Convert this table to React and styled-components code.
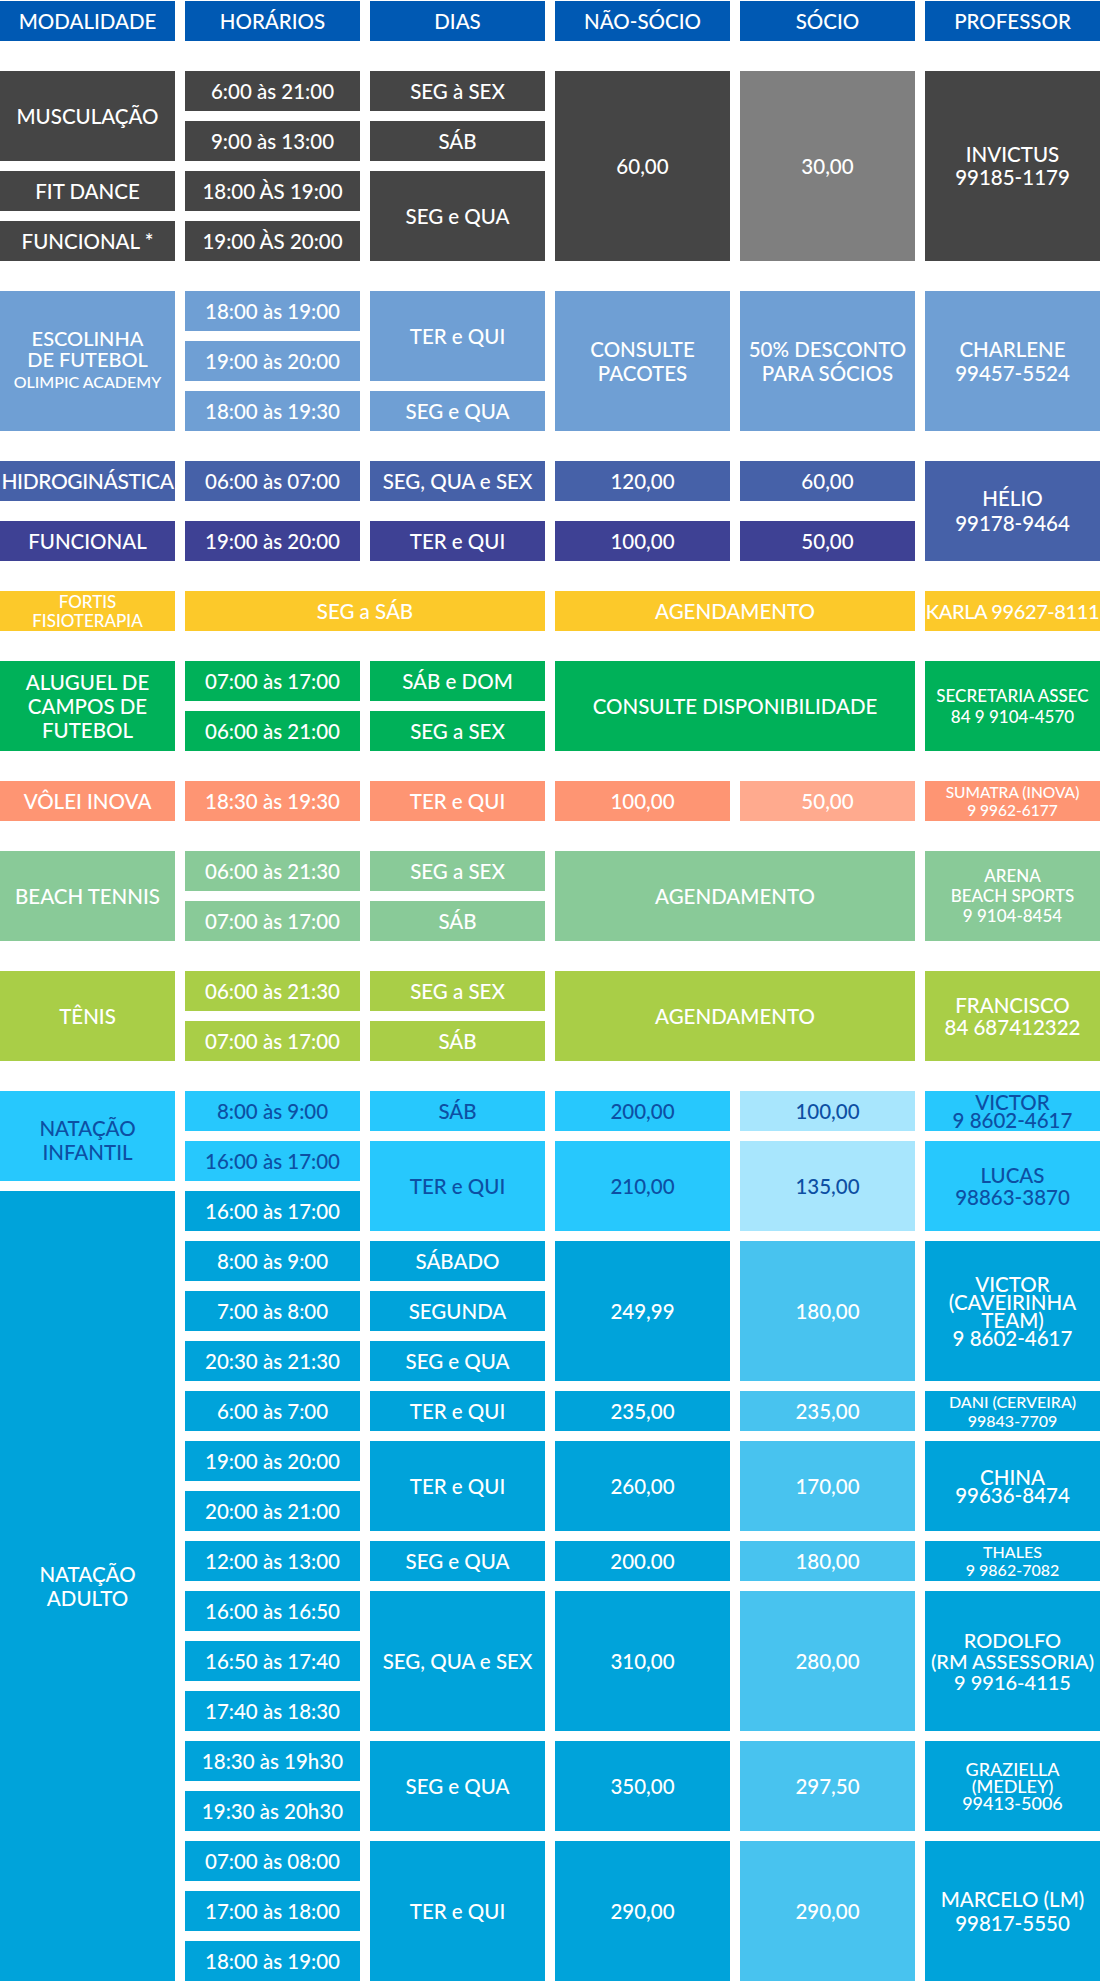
import styled, { createGlobalStyle } from "styled-components";

const GlobalStyle = createGlobalStyle`
  body {
    margin: 0;
    background: #ffffff;
    font-family: "Lato", "Open Sans", sans-serif;
  }
`;

const C = {
    header: "#0059b3",
    dark: "#454545",
    grey: "#7f7f7f",
    escolinha: "#6f9fd4",
    hidro: "#4661a8",
    funcional: "#3e4194",
    yellow: "#fcc92a",
    green: "#00b159",
    orange: "#fe9573",
    orangeLight: "#ffaa8e",
    beach: "#89ca98",
    tenis: "#a9ce47",
    cyan: "#27c8fd",
    cyanLight: "#a8e6fd",
    ink: "#0d4fa3",
    adulto: "#00a3da",
    adultoLight: "#48c3ef",
};

const Page = styled.div`
    width: 1100px;
    padding-top: 1px;
    display: flex;
    flex-direction: column;
    gap: 30px;
`;

const Section = styled.div`
    display: grid;
    grid-template-columns: repeat(6, 175px);
    grid-auto-rows: 40px;
    column-gap: 10px;
    row-gap: ${({ $rowGap }) => $rowGap || 10}px;
`;

const HeadCell = styled.div`
    background: ${C.header};
    color: #fff;
    font-size: 20.5px;
    font-weight: 500;
    display: flex;
    align-items: center;
    justify-content: center;
`;

const Cell = styled.div`
    grid-row: ${({ $r }) => $r} / span ${({ $rs }) => $rs || 1};
    grid-column: ${({ $c }) => $c} / span ${({ $cs }) => $cs || 1};
    box-sizing: border-box;
    padding-top: ${({ $pt }) => $pt || 0}px;
    background: ${({ $bg }) => $bg};
    color: ${({ $ink }) => $ink || "#fff"};
    font-size: ${({ $size }) => $size || 20.5}px;
    line-height: ${({ $lh }) => ($lh ? `${$lh}px` : 1.2)};
    letter-spacing: ${({ $ls }) => $ls || 0}px;
    font-weight: 500;
    display: flex;
    flex-direction: column;
    align-items: center;
    justify-content: center;
    text-align: center;
    white-space: pre;
    overflow: visible;
`;

const Small = styled.span`
    display: block;
    font-size: 16px;
    line-height: 24px;
`;

const heads = ["MODALIDADE", "HORÁRIOS", "DIAS", "NÃO-SÓCIO", "SÓCIO", "PROFESSOR"];

const cell = (r, c, text, bg, extra = {}) => ({ r, c, text, bg, ...extra });

const sections = [
    {
        cells: [
            cell(1, 1, "MUSCULAÇÃO", C.dark, { rs: 2 }),
            cell(3, 1, "FIT DANCE", C.dark),
            cell(4, 1, "FUNCIONAL *", C.dark),
            cell(1, 2, "6:00 às 21:00", C.dark),
            cell(2, 2, "9:00 às 13:00", C.dark),
            cell(3, 2, "18:00 ÀS 19:00", C.dark),
            cell(4, 2, "19:00 ÀS 20:00", C.dark),
            cell(1, 3, "SEG à SEX", C.dark),
            cell(2, 3, "SÁB", C.dark),
            cell(3, 3, "SEG e QUA", C.dark, { rs: 2 }),
            cell(1, 4, "60,00", C.dark, { rs: 4 }),
            cell(1, 5, "30,00", C.grey, { rs: 4 }),
            cell(1, 6, "INVICTUS\n99185-1179", C.dark, { rs: 4, lh: 23 }),
        ],
    },
    {
        cells: [
            cell(1, 1, <>ESCOLINHA{"\n"}DE FUTEBOL<Small>OLIMPIC ACADEMY</Small></>, C.escolinha, { rs: 3, size: 20, lh: 21 }),
            cell(1, 2, "18:00 às 19:00", C.escolinha),
            cell(2, 2, "19:00 às 20:00", C.escolinha),
            cell(3, 2, "18:00 às 19:30", C.escolinha),
            cell(1, 3, "TER e QUI", C.escolinha, { rs: 2 }),
            cell(3, 3, "SEG e QUA", C.escolinha),
            cell(1, 4, "CONSULTE\nPACOTES", C.escolinha, { rs: 3, lh: 24 }),
            cell(1, 5, "50% DESCONTO\nPARA SÓCIOS", C.escolinha, { rs: 3, lh: 24 }),
            cell(1, 6, "CHARLENE\n99457-5524", C.escolinha, { rs: 3, lh: 24 }),
        ],
    },
    {
        rowGap: 20,
        cells: [
            cell(1, 1, "HIDROGINÁSTICA", C.hidro, { size: 21, ls: -0.4 }),
            cell(1, 2, "06:00 às 07:00", C.hidro),
            cell(1, 3, "SEG, QUA e SEX", C.hidro),
            cell(1, 4, "120,00", C.hidro),
            cell(1, 5, "60,00", C.hidro),
            cell(2, 1, "FUNCIONAL", C.funcional),
            cell(2, 2, "19:00 às 20:00", C.funcional),
            cell(2, 3, "TER e QUI", C.funcional),
            cell(2, 4, "100,00", C.funcional),
            cell(2, 5, "50,00", C.funcional),
            cell(1, 6, "HÉLIO\n99178-9464", C.hidro, { rs: 2, lh: 25 }),
        ],
    },
    {
        cells: [
            cell(1, 1, "FORTIS\nFISIOTERAPIA", C.yellow, { size: 17, lh: 19 }),
            cell(1, 2, "SEG a SÁB", C.yellow, { cs: 2 }),
            cell(1, 4, "AGENDAMENTO", C.yellow, { cs: 2 }),
            cell(1, 6, "KARLA 99627-8111", C.yellow, { size: 20, ls: -0.4 }),
        ],
    },
    {
        cells: [
            cell(1, 1, "ALUGUEL DE\nCAMPOS DE\nFUTEBOL", C.green, { rs: 2, lh: 24 }),
            cell(1, 2, "07:00 às 17:00", C.green),
            cell(2, 2, "06:00 às 21:00", C.green),
            cell(1, 3, "SÁB e DOM", C.green),
            cell(2, 3, "SEG a SEX", C.green),
            cell(1, 4, "CONSULTE DISPONIBILIDADE", C.green, { rs: 2, cs: 2 }),
            cell(1, 6, "SECRETARIA ASSEC\n84 9 9104-4570", C.green, { rs: 2, size: 17, lh: 21 }),
        ],
    },
    {
        cells: [
            cell(1, 1, "VÔLEI INOVA", C.orange),
            cell(1, 2, "18:30 às 19:30", C.orange),
            cell(1, 3, "TER e QUI", C.orange),
            cell(1, 4, "100,00", C.orange),
            cell(1, 5, "50,00", C.orangeLight),
            cell(1, 6, "SUMATRA (INOVA)\n9 9962-6177", C.orange, { size: 15.5, lh: 18 }),
        ],
    },
    {
        cells: [
            cell(1, 1, "BEACH TENNIS", C.beach, { rs: 2 }),
            cell(1, 2, "06:00 às 21:30", C.beach),
            cell(2, 2, "07:00 às 17:00", C.beach),
            cell(1, 3, "SEG a SEX", C.beach),
            cell(2, 3, "SÁB", C.beach),
            cell(1, 4, "AGENDAMENTO", C.beach, { rs: 2, cs: 2 }),
            cell(1, 6, "ARENA\nBEACH SPORTS\n9 9104-8454", C.beach, { rs: 2, size: 17, lh: 20 }),
        ],
    },
    {
        cells: [
            cell(1, 1, "TÊNIS", C.tenis, { rs: 2 }),
            cell(1, 2, "06:00 às 21:30", C.tenis),
            cell(2, 2, "07:00 às 17:00", C.tenis),
            cell(1, 3, "SEG a SEX", C.tenis),
            cell(2, 3, "SÁB", C.tenis),
            cell(1, 4, "AGENDAMENTO", C.tenis, { rs: 2, cs: 2 }),
            cell(1, 6, "FRANCISCO\n84 687412322", C.tenis, { rs: 2, lh: 22 }),
        ],
    },
    {
        cells: [
            cell(1, 1, "NATAÇÃO\nINFANTIL", C.cyan, { rs: 2, ink: C.ink, lh: 24, pt: 8 }),
            cell(3, 1, "NATAÇÃO\nADULTO", C.adulto, { rs: 16, lh: 24 }),

            cell(1, 2, "8:00 às 9:00", C.cyan, { ink: C.ink }),
            cell(1, 3, "SÁB", C.cyan, { ink: C.ink }),
            cell(1, 4, "200,00", C.cyan, { ink: C.ink }),
            cell(1, 5, "100,00", C.cyanLight, { ink: C.ink }),
            cell(1, 6, "VICTOR\n9 8602-4617", C.cyan, { ink: C.ink, lh: 18 }),

            cell(2, 2, "16:00 às 17:00", C.cyan, { ink: C.ink }),
            cell(2, 3, "TER e QUI", C.cyan, { rs: 2, ink: C.ink }),
            cell(2, 4, "210,00", C.cyan, { rs: 2, ink: C.ink }),
            cell(2, 5, "135,00", C.cyanLight, { rs: 2, ink: C.ink }),
            cell(2, 6, "LUCAS\n98863-3870", C.cyan, { rs: 2, ink: C.ink, lh: 22 }),
            cell(3, 2, "16:00 às 17:00", C.adulto),

            cell(4, 2, "8:00 às 9:00", C.adulto),
            cell(5, 2, "7:00 às 8:00", C.adulto),
            cell(6, 2, "20:30 às 21:30", C.adulto),
            cell(4, 3, "SÁBADO", C.adulto),
            cell(5, 3, "SEGUNDA", C.adulto),
            cell(6, 3, "SEG e QUA", C.adulto),
            cell(4, 4, "249,99", C.adulto, { rs: 3 }),
            cell(4, 5, "180,00", C.adultoLight, { rs: 3 }),
            cell(4, 6, "VICTOR\n(CAVEIRINHA\nTEAM)\n9 8602-4617", C.adulto, { rs: 3, lh: 18 }),

            cell(7, 2, "6:00 às 7:00", C.adulto),
            cell(7, 3, "TER e QUI", C.adulto),
            cell(7, 4, "235,00", C.adulto),
            cell(7, 5, "235,00", C.adultoLight),
            cell(7, 6, "DANI (CERVEIRA)\n99843-7709", C.adulto, { size: 16, lh: 19 }),

            cell(8, 2, "19:00 às 20:00", C.adulto),
            cell(9, 2, "20:00 às 21:00", C.adulto),
            cell(8, 3, "TER e QUI", C.adulto, { rs: 2 }),
            cell(8, 4, "260,00", C.adulto, { rs: 2 }),
            cell(8, 5, "170,00", C.adultoLight, { rs: 2 }),
            cell(8, 6, "CHINA\n99636-8474", C.adulto, { rs: 2, lh: 18 }),

            cell(10, 2, "12:00 às 13:00", C.adulto),
            cell(10, 3, "SEG e QUA", C.adulto),
            cell(10, 4, "200.00", C.adulto),
            cell(10, 5, "180,00", C.adultoLight),
            cell(10, 6, "THALES\n9 9862-7082", C.adulto, { size: 16, lh: 18 }),

            cell(11, 2, "16:00 às 16:50", C.adulto),
            cell(12, 2, "16:50 às 17:40", C.adulto),
            cell(13, 2, "17:40 às 18:30", C.adulto),
            cell(11, 3, "SEG, QUA e SEX", C.adulto, { rs: 3 }),
            cell(11, 4, "310,00", C.adulto, { rs: 3 }),
            cell(11, 5, "280,00", C.adultoLight, { rs: 3 }),
            cell(11, 6, "RODOLFO\n(RM ASSESSORIA)\n9 9916-4115", C.adulto, { rs: 3, size: 20, lh: 21 }),

            cell(14, 2, "18:30 às 19h30", C.adulto),
            cell(15, 2, "19:30 às 20h30", C.adulto),
            cell(14, 3, "SEG e QUA", C.adulto, { rs: 2 }),
            cell(14, 4, "350,00", C.adulto, { rs: 2 }),
            cell(14, 5, "297,50", C.adultoLight, { rs: 2 }),
            cell(14, 6, "GRAZIELLA\n(MEDLEY)\n99413-5006", C.adulto, { rs: 2, size: 18, lh: 17 }),

            cell(16, 2, "07:00 às 08:00", C.adulto),
            cell(17, 2, "17:00 às 18:00", C.adulto),
            cell(18, 2, "18:00 às 19:00", C.adulto),
            cell(16, 3, "TER e QUI", C.adulto, { rs: 3 }),
            cell(16, 4, "290,00", C.adulto, { rs: 3 }),
            cell(16, 5, "290,00", C.adultoLight, { rs: 3 }),
            cell(16, 6, "MARCELO (LM)\n99817-5550", C.adulto, { rs: 3, lh: 24 }),
        ],
    },
];

const App = () => {
    return (
        <>
            <GlobalStyle />
            <Page>
                <Section>
                    {heads.map((h) => (
                        <HeadCell key={h}>{h}</HeadCell>
                    ))}
                </Section>

                {sections.map((section, si) => (
                    <Section key={si} $rowGap={section.rowGap}>
                        {section.cells.map((c, ci) => (
                            <Cell
                                key={ci}
                                $r={c.r}
                                $c={c.c}
                                $rs={c.rs}
                                $cs={c.cs}
                                $bg={c.bg}
                                $ink={c.ink}
                                $size={c.size}
                                $lh={c.lh}
                                $ls={c.ls}
                                $pt={c.pt}
                            >
                                {c.text}
                            </Cell>
                        ))}
                    </Section>
                ))}
            </Page>
        </>
    );
};

export default App;
